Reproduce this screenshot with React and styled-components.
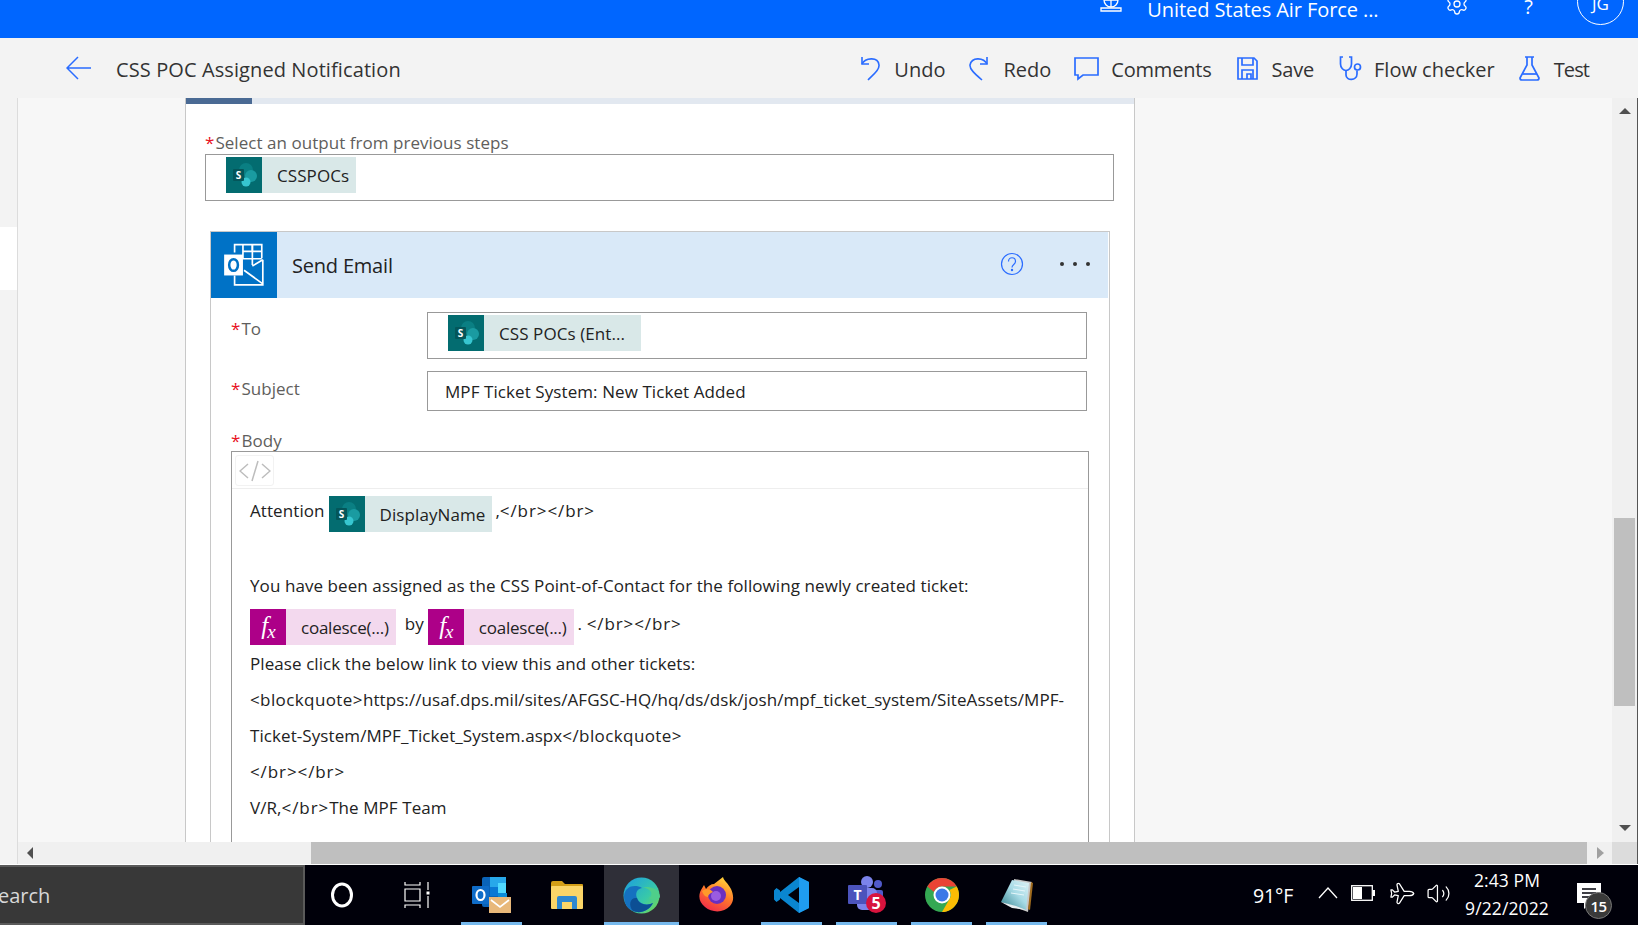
import React from 'react'
import styled, { createGlobalStyle } from 'styled-components'
import { Settings, Plane, Volume2 } from 'lucide-react'

const FONT = `"Open Sans", "Noto Sans", "Liberation Sans", sans-serif`

const GlobalStyle = createGlobalStyle`
  html, body { margin: 0; padding: 0; background: #f7f7f7; overflow: hidden; }
  * { box-sizing: border-box; }
  body { font-family: ${FONT}; }
`

const Page = styled.div`
  width: 1638px;
  height: 925px;
  display: flex;
  flex-direction: column;
  overflow: hidden;
`

/* top blue bar, its content is cut off by the screenshot */
const TopBar = styled.header`
  height: 38px;
  flex: none;
  background: #0066ff;
  display: flex;
  align-items: flex-start;
  justify-content: flex-end;
  overflow: hidden;
  color: #fff;
`
const TenantIcon = styled.svg`
  width: 24px;
  height: 24px;
  margin-top: -10px;
  margin-right: 24px;
`
const Tenant = styled.span`
  font-size: 20px;
  line-height: 20px;
  letter-spacing: -0.08px;
  width: 237px;
  white-space: nowrap;
  margin-right: 61px;
`
const GearWrap = styled.span`
  display: flex;
  margin-top: -8px;
  margin-right: 55px;
`
const HelpMark = styled.span`
  font-size: 20px;
  line-height: 20px;
  margin-top: -3px;
  margin-right: 44px;
`
const Avatar = styled.div`
  width: 47px;
  height: 47px;
  flex: none;
  margin-top: -22px;
  margin-right: 14px;
  border: 1px solid #fff;
  border-radius: 50%;
  font-size: 17px;
  display: flex;
  align-items: flex-end;
  justify-content: center;
  padding-bottom: 9px;
`

const ToolBar = styled.div`
  height: 60px;
  flex: none;
  background: #f3f3f3;
  display: flex;
  align-items: center;
  padding: 2px 49px 0 66px;
`
const BackIcon = styled.svg`
  width: 25px;
  height: 24px;
  margin-top: -2px;
`
const FlowTitle = styled.h1`
  margin: 0 0 0 25px;
  font-size: 20px;
  font-weight: 400;
  color: #333;
  letter-spacing: 0.1px;
`
const Actions = styled.div`
  margin-left: auto;
  display: flex;
  align-items: center;
  gap: 25px;
`
const Action = styled.div`
  display: flex;
  align-items: center;
  gap: ${p => p.$gap || 14}px;
  margin-right: ${p => p.$space || 0}px;
  font-size: 20px;
  color: #333;
  letter-spacing: ${p => p.$track ?? 0}px;
  svg { display: block; margin-top: -2px; }
`

const Workspace = styled.div`
  height: 744px;
  flex: none;
  display: flex;
  overflow: hidden;
`
const Rail = styled.aside`
  width: 18px;
  flex: none;
  background: #f3f3f3;
  border-right: 1px solid #dcdcdc;
  padding-top: 129px;
`
const RailTab = styled.div`
  height: 63px;
  background: #fff;
`
const Canvas = styled.main`
  flex: 1;
  background: #f7f7f7;
  padding-left: 167px;
  overflow: hidden;
`
const Card = styled.section`
  width: 950px;
  background: #fff;
  border-left: 1px solid #c8c8c8;
  border-right: 1px solid #c8c8c8;
  padding-bottom: 40px;
`
const Progress = styled.div`
  height: 6px;
  background: #e2e8f0;
`
const ProgressFill = styled.div`
  width: 66px;
  height: 100%;
  background: #4a6a94;
`
const FieldLabel = styled.label`
  display: block;
  font-size: 17px;
  line-height: 22px;
  color: #605e5c;
  letter-spacing: 0.04px;
  white-space: nowrap;
  &::before {
    content: '*';
    color: #e81123;
    margin-right: 1px;
  }
`
const OutputField = styled.div`
  padding: 28px 20px 0 19px;
`
const Box = styled.div`
  border: 1.5px solid #999;
  background: #fff;
  display: flex;
  align-items: ${p => (p.$chip ? 'flex-start' : 'center')};
  height: ${p => p.$h}px;
  padding-left: ${p => p.$pad}px;
  padding-top: ${p => (p.$chip ? 1.5 : 0)}px;
  font-size: 17px;
  letter-spacing: 0.08px;
  color: #222;
  white-space: nowrap;
`
const ChipWrap = styled.span`
  display: inline-flex;
  align-items: stretch;
  flex: none;
  height: 36px;
  background: ${p => (p.$tone === 'fx' ? '#f3d9ee' : '#d9e8e8')};
  font-size: 17px;
  letter-spacing: ${p => (p.$tone === 'fx' ? -0.24 : 0.08)}px;
  color: #222;
  white-space: nowrap;
`
const ChipIcon = styled.span`
  width: 36px;
  flex: none;
  display: flex;
  align-items: center;
  justify-content: center;
  background: ${p => (p.$tone === 'fx' ? '#ad0088' : '#036c70')};
  color: #fff;
`
const FxMark = styled.span`
  font: italic 25px/1 "Liberation Serif", serif;
  letter-spacing: -1px;
  padding-bottom: 3px;
  small { font-size: 19px; position: relative; top: 4px; }
`
const ChipText = styled.span`
  display: flex;
  align-items: center;
  padding: 1px ${p => p.$right || 7}px 0 15px;
`
const ActionCard = styled.div`
  width: 900px;
  margin: 30px 0 0 24px;
  border: 1px solid #c8c8c8;
  border-bottom: 0;
`
const ActionHead = styled.div`
  height: 66px;
  margin-right: 1px;
  background: #d9e9f8;
  display: flex;
  align-items: center;
  padding-right: 18px;
`
const ActionLogo = styled.div`
  width: 66px;
  height: 66px;
  flex: none;
  background: #0072c6;
  display: flex;
  align-items: center;
  justify-content: center;
`
const ActionName = styled.div`
  margin-left: 15px;
  font-size: 20px;
  color: #222;
  letter-spacing: -0.2px;
  flex: 1;
`
const HelpIcon = styled.svg`
  width: 24px;
  height: 24px;
  margin-top: -2px;
`
const MoreDots = styled.div`
  display: flex;
  gap: 9px;
  margin-left: 36px;
  margin-top: -2px;
  span { width: 4px; height: 4px; border-radius: 50%; background: #333; }
`
const ActionForm = styled.div`
  padding: 14px 20px 0 20px;
`
const Row = styled.div`
  display: grid;
  grid-template-columns: 196px 660px;
  margin-bottom: 12px;
`
const RowLabel = styled(FieldLabel)`
  margin-top: ${p => p.$top || 6}px;
`
const BodyLabel = styled(FieldLabel)`
  margin-top: 20px;
  line-height: 20px;
`
const BodyBox = styled.div`
  width: 858px;
  border: 1.5px solid #999;
`
const BodyTools = styled.div`
  height: 37px;
  border-bottom: 1px solid #eee;
  padding: 3px;
`
const CodeBtn = styled.div`
  width: 39px;
  height: 31px;
  border: 1px solid #f2f2f2;
  border-radius: 3px;
  display: flex;
  align-items: center;
  justify-content: center;
`
const BodyText = styled.div`
  padding: 7px 0 30px 18px;
  font-size: 17px;
  letter-spacing: 0.08px;
  color: #222;
  white-space: nowrap;
`
const Line = styled.div`
  height: 36px;
  line-height: 36px;
  display: flex;
  align-items: flex-start;
  margin-bottom: ${p => p.$bottom || 0}px;
`
const Inline = styled.span`
  line-height: 30px;
  margin: 0 ${p => p.$right || 4}px 0 ${p => p.$left || 0}px;
`
/* the tag strings run wider in the reference's font */
const Tag = styled.span`
  letter-spacing: 0.9px;
`
const QuoteTag = styled.span`
  letter-spacing: 0.4px;
`

const VScroll = styled.div`
  width: 26px;
  flex: none;
  background: #f0f0f0;
  border-right: 1px solid #555;
  display: flex;
  flex-direction: column;
  align-items: center;
  padding: 10px 0 11px;
`
const Thumb = styled.div`
  background: #bfbfbf;
  width: 21px;
  height: 188px;
  margin-top: 404px;
`
const ArrowUp = styled.i`
  width: 0;
  height: 0;
  border-left: 6px solid transparent;
  border-right: 6px solid transparent;
  border-bottom: 6px solid #505050;
`
const ArrowDown = styled.i`
  width: 0;
  height: 0;
  border-left: 6px solid transparent;
  border-right: 6px solid transparent;
  border-top: 6px solid #505050;
  margin-top: auto;
`
const HScroll = styled.div`
  height: 22px;
  flex: none;
  display: flex;
  background: #f0f0f0;
`
const HRail = styled.div`
  width: 18px;
  background: #f3f3f3;
  border-right: 1px solid #dcdcdc;
`
const HTrack = styled.div`
  flex: 1;
  display: flex;
  align-items: center;
`
const ArrowLeft = styled.i`
  width: 0;
  height: 0;
  margin-left: 9px;
  border-top: 6px solid transparent;
  border-bottom: 6px solid transparent;
  border-right: 6px solid #505050;
`
const HThumb = styled.div`
  height: 100%;
  width: 1276px;
  margin-left: 278px;
  background: #bfbfbf;
`
const ArrowRight = styled.i`
  width: 0;
  height: 0;
  margin-left: 10px;
  border-top: 6px solid transparent;
  border-bottom: 6px solid transparent;
  border-left: 7px solid #a0a0a0;
`
const Corner = styled.div`
  width: 26px;
  background: #dcdcdc;
  border-right: 1px solid #555;
`
const Seam = styled.div`
  height: 1px;
  flex: none;
  background: #fff;
`

const TaskBar = styled.footer`
  height: 60px;
  flex: none;
  background: #00000a;
  display: flex;
  color: #fff;
`
const SearchBox = styled.div`
  width: 305px;
  flex: none;
  background: #383838;
  border: 2px solid #5a5a5a;
  border-left: 0;
  overflow: hidden;
  display: flex;
  align-items: center;
  font-size: 20px;
  color: #d8d8d8;
  span { margin-left: -13px; }
`
const Slots = styled.div`
  display: flex;
  margin-left: -1px;
`
const Slot = styled.div`
  position: relative;
  width: 75px;
  display: flex;
  align-items: center;
  justify-content: center;
  background: ${p => (p.$active ? '#2f2f38' : 'transparent')};
  &::after {
    content: '';
    display: ${p => (p.$open ? 'block' : 'none')};
    position: absolute;
    bottom: 0;
    height: 3px;
    left: ${p => (p.$active ? 0 : 7)}px;
    right: ${p => (p.$active ? 0 : 7)}px;
    background: #76b9ed;
  }
`
const Tray = styled.div`
  margin-left: auto;
  display: flex;
  align-items: center;
  svg { display: block; }
`
const Weather = styled.span`
  font-size: 19.5px;
  margin-right: 25px;
  letter-spacing: -0.2px;
`
const TrayIcons = styled.div`
  display: flex;
  align-items: center;
  gap: 13px;
  margin-top: -4px;
`
const TrayPlane = styled(Plane)`
  transform: rotate(45deg);
`
const Clock = styled.div`
  width: 112px;
  text-align: center;
  font-size: 17.5px;
  line-height: 28px;
  letter-spacing: 0.1px;
  margin-top: -3px;
`
const Notice = styled.div`
  position: relative;
  width: 52px;
  height: 60px;
  margin-right: 23px;
  padding-top: 5px;
  display: flex;
  align-items: center;
  justify-content: center;
`
const NoticeBadge = styled.span`
  position: absolute;
  left: 22px;
  top: 27px;
  width: 27px;
  height: 27px;
  border-radius: 50%;
  background: #3a3a3a;
  border: 1px solid #777;
  font-size: 15px;
  font-weight: 600;
  display: flex;
  align-items: center;
  justify-content: center;
  letter-spacing: -0.5px;
`

const BLUE = '#2a6cff'

function SharePointIcon({ size = 36 }) {
  return (
    <svg width={size} height={size} viewBox="0 0 36 36">
      <circle cx="20" cy="13" r="7" fill="#0a7f83" />
      <circle cx="25" cy="19" r="6" fill="#1a9ba1" />
      <circle cx="20" cy="25" r="4.5" fill="#37c6d0" />
      <rect x="7" y="12" width="11" height="12" rx="1" fill="#04565a" />
      <text x="12.5" y="22" fontSize="10" fontWeight="700" fill="#fff" textAnchor="middle" fontFamily="Open Sans">S</text>
    </svg>
  )
}

function OutlookWhite() {
  return (
    <svg width="46" height="46" viewBox="0 0 44 44" fill="none" stroke="#fff" strokeWidth="1.6">
      <path d="M13 10V2.5h26v13" />
      <path d="M21 2.5V16M30 2.5V22M39 9H21M39 16H21" />
      <path d="M30 9V2.5M13 32v9h27V17" />
      <path d="M22 27l18 13M30 23l10-6" />
      <rect x="3" y="12" width="18" height="20" fill="#fff" stroke="none" />
      <ellipse cx="12" cy="22" rx="4.2" ry="5.6" stroke="#0072c6" strokeWidth="2.4" />
    </svg>
  )
}

function FieldChip({ tone, children, right }) {
  return (
    <ChipWrap $tone={tone}>
      <ChipIcon $tone={tone}>
        {tone === 'fx' ? <FxMark>f<small>x</small></FxMark> : <SharePointIcon />}
      </ChipIcon>
      <ChipText $right={right}>{children}</ChipText>
    </ChipWrap>
  )
}

const UndoIcon = () => (
  <svg width="20" height="25" viewBox="0 0 20 25" fill="none" stroke={BLUE} strokeWidth="1.6">
    <path d="M2 1v7h7" />
    <path d="M2 8C5 2 18 0 19 9c.4 4-3 7-11 15" />
  </svg>
)
const RedoIcon = () => (
  <svg width="20" height="25" viewBox="0 0 20 25" fill="none" stroke={BLUE} strokeWidth="1.6">
    <path d="M18 1v7h-7" />
    <path d="M18 8C15 2 3 0 1 9c-.4 4 4 8 12 15" />
  </svg>
)
const CommentIcon = () => (
  <svg width="25" height="25" viewBox="0 0 25 25" fill="none" stroke={BLUE} strokeWidth="1.7">
    <path d="M1 2h23v17H9l-5 4v-4H1z" />
  </svg>
)
const SaveIcon = () => (
  <svg width="21" height="23" viewBox="0 0 21 23" fill="none" stroke={BLUE} strokeWidth="1.7">
    <path d="M1 1h16l3 3v18H1z" />
    <path d="M5 1v7h11V1M5 22v-9h11v9M10 22v-5h4v5" />
  </svg>
)
const StethoscopeIcon = () => (
  <svg width="25" height="25" viewBox="0 0 25 25" fill="none" stroke={BLUE} strokeWidth="1.7">
    <path d="M4 1H1.500v7c0 4 3 6.500 5.500 6.500s5.500-2.500 5.500-6.500V1H10" />
    <path d="M7 14.500V19c0 6 11 6 11-1v-3.500" />
    <circle cx="18.500" cy="11" r="3" />
  </svg>
)
const FlaskIcon = () => (
  <svg width="21" height="25" viewBox="0 0 21 25" fill="none" stroke={BLUE} strokeWidth="1.7">
    <path d="M6 1h9M8 1v8L1 22q0 2 2 2h15q2 0 2-2L13 9V1" />
    <path d="M3.500 18h14" />
  </svg>
)

const OutlookApp = () => (
  <svg width="40" height="40" viewBox="0 0 40 40">
    <rect x="10" y="2" width="24" height="30" rx="2" fill="#0a63b8" />
    <rect x="18" y="2" width="16" height="10" fill="#28a8ea" />
    <rect x="26" y="8" width="8" height="10" fill="#50d9ff" />
    <rect x="18" y="12" width="8" height="9" fill="#0a78d4" />
    <rect x="26" y="18" width="9" height="12" fill="#0a8ad8" />
    <rect x="0" y="11" width="17" height="18" rx="1" fill="#0f6cc8" />
    <ellipse cx="8.500" cy="20" rx="4" ry="5" fill="none" stroke="#fff" strokeWidth="2.200" />
    <rect x="17" y="22" width="22" height="16" fill="#e8b87a" />
    <path d="M19 25l9 7 9-7" fill="none" stroke="#fff" strokeWidth="1.600" />
  </svg>
)
const FolderApp = () => (
  <svg width="34" height="34" viewBox="0 0 34 34">
    <path d="M1 5q0-2 2-2h9l3 3h17q1 0 1 1v3H1z" fill="#d39e18" />
    <rect x="1" y="8" width="32" height="23" rx="1" fill="#fbd568" />
    <path d="M7 31V20q0-2 2-2h16q2 0 2 2v11h-5v-7H12v7z" fill="#2f88d0" />
    <rect x="12" y="24" width="10" height="7" fill="#fbd568" />
  </svg>
)
const EdgeApp = () => (
  <svg width="37" height="37" viewBox="0 0 37 37">
    <defs>
      <linearGradient id="edgeA" x1="0" y1="0" x2="1" y2="1">
        <stop offset="0" stopColor="#1b9de2" />
        <stop offset="0.6" stopColor="#38c9a8" />
        <stop offset="1" stopColor="#7fdc45" />
      </linearGradient>
    </defs>
    <circle cx="18.500" cy="18.500" r="18" fill="url(#edgeA)" />
    <path d="M1 19C2 9 12 7 19 11c-5 1-7 5-5 10 2 6 10 8 16 5-4 8-13 11-20 8C4 32 1 26 1 19z" fill="#1571c0" />
    <path d="M10 34c-5-6-3-14 4-13 1 5 8 9 16 5-4 8-13 11-20 8z" fill="#0c4f94" />
    <path d="M37 20c-2 4-9 3-11 1 2-1 3-3 2-6-2-3-6-5-9-4 6-3 18 0 18 9z" fill="#4fcf8a" />
  </svg>
)
const FirefoxApp = () => (
  <svg width="36" height="38" viewBox="0 0 36 38">
    <defs>
      <linearGradient id="foxA" x1="0.7" y1="0" x2="0.2" y2="1">
        <stop offset="0" stopColor="#ffd33a" />
        <stop offset="0.45" stopColor="#ff7a2a" />
        <stop offset="1" stopColor="#f0264c" />
      </linearGradient>
    </defs>
    <path d="M2 14l3-5 2 4c2-3 5-5 8-5l9-7c1 4 5 6 8 12 3 7 3 12-1 17-6 7-18 7-25 1C0 26-1 20 2 14z" fill="url(#foxA)" />
    <circle cx="18" cy="19" r="9" fill="#6a2fc0" />
    <circle cx="17" cy="20" r="5" fill="#9a5ce0" />
    <path d="M3 15c4-3 9-2 11 1-3 1-5 3-5 5-3 0-5-3-6-6z" fill="#ff9a2a" />
  </svg>
)
const VSCodeApp = () => (
  <svg width="36" height="38" viewBox="0 0 36 38">
    <path d="M25 1l10 5v26l-10 5-19-15-4 3-2-2v-8l2-2 4 3z" fill="#0a86d0" />
    <path d="M25 1l10 5v26l-10 5z" fill="#1f9cf0" />
    <path d="M25 11l-11 8 11 8z" fill="#00000a" />
    <path d="M6 14.500L2.500 12 0 14.500l4 4.500-4 4.500L2.500 26 6 23.500" fill="#0a86d0" />
  </svg>
)
const TeamsApp = () => (
  <svg width="40" height="40" viewBox="0 0 40 40">
    <circle cx="20" cy="7" r="6" fill="#7b83eb" />
    <circle cx="31" cy="9" r="4" fill="#5059c9" />
    <rect x="24" y="15" width="12" height="14" rx="2" fill="#5059c9" />
    <rect x="10" y="13" width="20" height="22" rx="5" fill="#7b83eb" />
    <rect x="1" y="10" width="19" height="19" rx="1" fill="#4b53bc" />
    <text x="10.500" y="25" fontSize="14" fontWeight="700" fill="#fff" textAnchor="middle" fontFamily="Open Sans">T</text>
    <circle cx="29" cy="28" r="10" fill="#d7133d" />
    <text x="29" y="34" fontSize="16" fontWeight="700" fill="#fff" textAnchor="middle" fontFamily="Open Sans">5</text>
  </svg>
)
const ChromeApp = () => (
  <svg width="34" height="34" viewBox="0 0 34 34">
    <circle cx="17" cy="17" r="17" fill="#34a853" />
    <path d="M17 0a17 17 0 0 1 14.700 8.500H17a8.500 8.500 0 0 0-8 5.500L2.300 8.500A17 17 0 0 1 17 0z" fill="#ea4335" />
    <path d="M31.700 8.500A17 17 0 0 1 17 34l7.400-12.700A8.500 8.500 0 0 0 24.400 12z" fill="#fbbc04" />
    <circle cx="17" cy="17" r="8.500" fill="#fff" />
    <circle cx="17" cy="17" r="6.500" fill="#3b78e7" />
  </svg>
)
const NotepadApp = () => (
  <svg width="34" height="36" viewBox="0 0 34 36">
    <defs>
      <linearGradient id="padA" x1="0" y1="1" x2="1" y2="0">
        <stop offset="0" stopColor="#2f7f8c" />
        <stop offset="0.55" stopColor="#a8dbe6" />
        <stop offset="1" stopColor="#dff3f7" />
      </linearGradient>
    </defs>
    <path d="M14 2l18 3-4 30-11-4z" fill="#c8c8c8" />
    <path d="M12 3l17 3-3 27L1 25z" fill="url(#padA)" />
    <path d="M1 25l15 4 10 4-14-2z" fill="#e8eef0" />
    <path d="M31 5l2 1-3 27-2-1z" fill="#a06b1e" />
    <path d="M14 8l12 2M13 12l12 2M11 16l13 2" stroke="#e6f6fa" strokeWidth="1" />
  </svg>
)

export default function App() {
  return (
    <Page>
      <GlobalStyle />
      <TopBar>
        <TenantIcon viewBox="0 0 24 24" fill="none" stroke="#fff" strokeWidth="1.300">
          <circle cx="12" cy="10" r="7" />
          <path d="M5 10h14M12 3v14M2 21h20v-3H2z" />
        </TenantIcon>
        <Tenant>United States Air Force ...</Tenant>
        <GearWrap><Settings size={24} color="#fff" strokeWidth={1.3} /></GearWrap>
        <HelpMark>?</HelpMark>
        <Avatar>JG</Avatar>
      </TopBar>

      <ToolBar>
        <BackIcon viewBox="0 0 25 24" fill="none" stroke={BLUE} strokeWidth="1.500">
          <path d="M12 1L1 12l11 11M1 12h24" />
        </BackIcon>
        <FlowTitle>CSS POC Assigned Notification</FlowTitle>
        <Actions>
          <Action $space={-1}><UndoIcon />Undo</Action>
          <Action $space={-2}><RedoIcon />Redo</Action>
          <Action $gap={12} $track={-0.2}><CommentIcon />Comments</Action>
          <Action $track={-0.2}><SaveIcon />Save</Action>
          <Action $gap={10} $space={-1}><StethoscopeIcon />Flow checker</Action>
          <Action $track={-0.9}><FlaskIcon />Test</Action>
        </Actions>
      </ToolBar>

      <Workspace>
        <Rail><RailTab /></Rail>
        <Canvas>
          <Card>
            <Progress><ProgressFill /></Progress>
            <OutputField>
              <FieldLabel>Select an output from previous steps</FieldLabel>
              <Box $h={47} $pad={20} $chip><FieldChip>CSSPOCs</FieldChip></Box>
            </OutputField>
            <ActionCard>
              <ActionHead>
                <ActionLogo><OutlookWhite /></ActionLogo>
                <ActionName>Send Email</ActionName>
                <HelpIcon viewBox="0 0 24 24" fill="none" stroke={BLUE} strokeWidth="1.200">
                  <circle cx="12" cy="12" r="10.500" />
                  <path d="M8.500 9.500c0-5 7-5 7 0 0 3-3.500 3-3.500 6" />
                  <circle cx="12" cy="18" r=".6" fill={BLUE} />
                </HelpIcon>
                <MoreDots><span /><span /><span /></MoreDots>
              </ActionHead>
              <ActionForm>
                <Row>
                  <RowLabel>To</RowLabel>
                  <Box $h={47} $pad={20} $chip><FieldChip right={16}>CSS POCs (Ent...</FieldChip></Box>
                </Row>
                <Row>
                  <RowLabel $top={7}>Subject</RowLabel>
                  <Box $h={40} $pad={17}>MPF Ticket System: New Ticket Added</Box>
                </Row>
                <BodyLabel>Body</BodyLabel>
                <BodyBox>
                  <BodyTools>
                    <CodeBtn>
                      <svg width="32" height="24" viewBox="0 0 32 24" fill="none" stroke="#bdbdbd" strokeWidth="1.500">
                        <path d="M9 5l-8 7 8 7M23 5l8 7-8 7M19 2l-6 20" />
                      </svg>
                    </CodeBtn>
                  </BodyTools>
                  <BodyText>
                    <Line>
                      <Inline>Attention</Inline>
                      <FieldChip>DisplayName</FieldChip>
                      <Inline $left={3}>,<Tag>&lt;/br&gt;&lt;/br&gt;</Tag></Inline>
                    </Line>
                    <Line />
                    <Line $bottom={5}><span>You have been assigned as the CSS Point-of-Contact for the following newly created ticket:</span></Line>
                    <Line $bottom={1}>
                      <FieldChip tone="fx">coalesce(...)</FieldChip>
                      <Inline $left={9}>by</Inline>
                      <FieldChip tone="fx">coalesce(...)</FieldChip>
                      <Inline $left={4}>. <Tag>&lt;/br&gt;&lt;/br&gt;</Tag></Inline>
                    </Line>
                    <Line><span>Please click the below link to view this and other tickets:</span></Line>
                    <Line><span><QuoteTag>&lt;blockquote&gt;</QuoteTag>https://usaf.dps.mil/sites/AFGSC-HQ/hq/ds/dsk/josh/mpf_ticket_system/SiteAssets/MPF-</span></Line>
                    <Line><span>Ticket-System/MPF_Ticket_System.aspx<QuoteTag>&lt;/blockquote&gt;</QuoteTag></span></Line>
                    <Line><Tag>&lt;/br&gt;&lt;/br&gt;</Tag></Line>
                    <Line><span>V/R,<Tag>&lt;/br&gt;</Tag>The MPF Team</span></Line>
                  </BodyText>
                </BodyBox>
              </ActionForm>
            </ActionCard>
          </Card>
        </Canvas>
        <VScroll>
          <ArrowUp />
          <Thumb />
          <ArrowDown />
        </VScroll>
      </Workspace>

      <HScroll>
        <HRail />
        <HTrack>
          <ArrowLeft />
          <HThumb />
          <ArrowRight />
        </HTrack>
        <Corner />
      </HScroll>
      <Seam />

      <TaskBar>
        <SearchBox><span>Search</span></SearchBox>
        <Slots>
          <Slot>
            <svg width="24" height="26" viewBox="0 0 24 26" fill="none" stroke="#fff" strokeWidth="3">
              <ellipse cx="12" cy="13" rx="9.500" ry="11" />
            </svg>
          </Slot>
          <Slot>
            <svg width="26" height="26" viewBox="0 0 26 26" fill="none" stroke="#fff" strokeWidth="1.200">
              <path d="M1 0v3h15V0M1 7h15v12H1zM1 26v-3h15v3M24 0v8M24 14v12" />
              <rect x="22.500" y="9.500" width="3" height="3" fill="#fff" stroke="none" />
            </svg>
          </Slot>
          <Slot $open><OutlookApp /></Slot>
          <Slot><FolderApp /></Slot>
          <Slot $active $open><EdgeApp /></Slot>
          <Slot><FirefoxApp /></Slot>
          <Slot $open><VSCodeApp /></Slot>
          <Slot $open><TeamsApp /></Slot>
          <Slot $open><ChromeApp /></Slot>
          <Slot $open><NotepadApp /></Slot>
        </Slots>
        <Tray>
          <Weather>91°F</Weather>
          <TrayIcons>
            <svg width="20" height="12" viewBox="0 0 20 12" fill="none" stroke="#fff" strokeWidth="1.300">
              <path d="M1 11l9-10 9 10" />
            </svg>
            <svg width="24" height="16" viewBox="0 0 24 16">
              <rect x=".7" y=".7" width="20.600" height="14.600" fill="none" stroke="#fff" strokeWidth="1.300" />
              <rect x="2" y="2" width="9" height="12" fill="#fff" />
              <rect x="22" y="5" width="2" height="6" fill="#fff" />
            </svg>
            <TrayPlane size={25} color="#fff" strokeWidth={1.2} />
            <Volume2 size={25} color="#fff" strokeWidth={1.2} />
          </TrayIcons>
          <Clock>
            <div>2:43 PM</div>
            <div>9/22/2022</div>
          </Clock>
          <Notice>
            <svg width="26" height="30" viewBox="0 0 26 30">
              <path d="M1 0h24v20H14l-6 6v-6H1z" fill="#fff" />
              <path d="M6 6h14M6 10h14M6 14h14" stroke="#00000a" strokeWidth="1.300" />
            </svg>
            <NoticeBadge>15</NoticeBadge>
          </Notice>
        </Tray>
      </TaskBar>
    </Page>
  )
}
